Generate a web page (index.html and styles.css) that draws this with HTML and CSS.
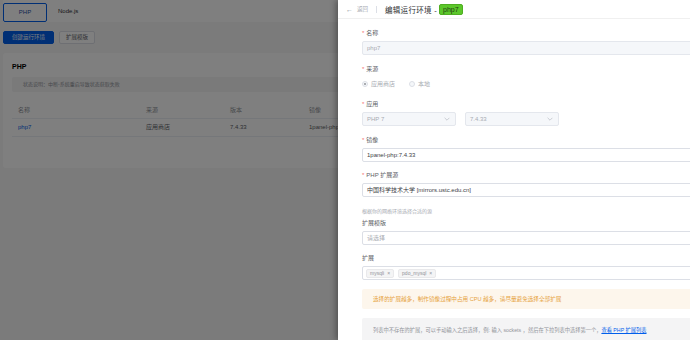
FILE: index.html
```html
<!DOCTYPE html>
<html>
<head>
<meta charset="utf-8">
<link rel="stylesheet" href="styles.css">
</head>
<body>
<div class="page">
  <div class="tabs">
    <div class="tab active">PHP</div>
    <div class="tab">Node.js</div>
  </div>
  <div class="actions">
    <div class="btn primary">创建运行环境</div>
    <div class="btn">扩展模版</div>
  </div>
  <div class="card">
    <div class="card-title">PHP</div>
    <div class="notice">状态说明：中断-系统重启导致状态获取失败</div>
    <div class="table">
      <div class="tr th">
        <div class="td">名称</div><div class="td">来源</div><div class="td">版本</div><div class="td">镜像</div>
      </div>
      <div class="tr">
        <div class="td link">php7</div><div class="td">应用商店</div><div class="td">7.4.33</div><div class="td">1panel-php:7.4.33</div>
      </div>
    </div>
  </div>
</div>
<div class="overlay"></div>
<div class="drawer">
  <div class="drawer-head">
    <span class="back-arrow">←</span>
    <span class="back">返回</span>
    <span class="divider"></span>
    <span class="title">编辑运行环境 -</span>
    <span class="tag-green">php7</span>
  </div>
  <div class="form">
    <div class="field">
      <div class="label"><span class="req">*</span>名称</div>
      <div class="input disabled">php7</div>
    </div>
    <div class="field">
      <div class="label"><span class="req">*</span>来源</div>
      <div class="radios">
        <span class="radio"><span class="dot checked"></span>应用商店</span>
        <span class="radio"><span class="dot"></span>本地</span>
      </div>
    </div>
    <div class="field">
      <div class="label"><span class="req">*</span>应用</div>
      <div class="selects">
        <div class="input disabled select">PHP 7<svg class="chev" viewBox="0 0 10 6" width="6" height="4"><path d="M1 1l4 4 4-4" fill="none" stroke="#b8bcc4" stroke-width="1.2"/></svg></div>
        <div class="input disabled select">7.4.33<svg class="chev" viewBox="0 0 10 6" width="6" height="4"><path d="M1 1l4 4 4-4" fill="none" stroke="#b8bcc4" stroke-width="1.2"/></svg></div>
      </div>
    </div>
    <div class="field">
      <div class="label"><span class="req">*</span>镜像</div>
      <div class="input">1panel-php:7.4.33</div>
    </div>
    <div class="field">
      <div class="label"><span class="req">*</span>PHP 扩展源</div>
      <div class="input">中国科学技术大学 [mirrors.ustc.edu.cn]</div>
      <div class="help">根据你的网络环境选择合适的源</div>
    </div>
    <div class="field">
      <div class="label">扩展模版</div>
      <div class="input placeholder">请选择</div>
    </div>
    <div class="field">
      <div class="label">扩展</div>
      <div class="input multi">
        <span class="tag">mysqli<span class="x">×</span></span>
        <span class="tag">pdo_mysql<span class="x">×</span></span>
      </div>
    </div>
    <div class="warn">选择的扩展越多，制作镜像过程中占用 CPU 越多，请尽量避免选择全部扩展</div>
    <div class="info">列表中不存在的扩展，可以手动输入之后选择，例: 输入 sockets ，然后在下拉列表中选择第一个，<span class="a">查看 PHP 扩展列表</span></div>
  </div>
</div>
</body>
</html>
```

FILE: styles.css
```css
* { box-sizing: border-box; }
html, body { margin: 0; padding: 0; }
body {
  width: 690px;
  height: 340px;
  overflow: hidden;
  background: #f6f6f6;
  font-family: "Liberation Sans", "Noto Sans CJK SC", sans-serif;
  color: #303133;
  position: relative;
}
.page { padding-left: 3px; }
.tabs {
  height: 22px;
  background: #fff;
  display: flex;
  align-items: flex-end;
  font-size: 6px;
}
.tab {
  height: 19px;
  line-height: 17px;
  color: #303133;
  margin-left: 11px;
}
.tab.active {
  width: 44px;
  margin-left: 0;
  border: 1px solid #005eeb;
  border-radius: 2px;
  text-align: center;
  color: #1f4f9f;
}
.actions { display: flex; gap: 5px; margin-top: 9px; }
.btn {
  height: 13px;
  line-height: 11px;
  padding: 0 6px;
  font-size: 5.5px;
  border: 1px solid #dcdfe6;
  background: #fff;
  color: #606266;
  border-radius: 2px;
}
.btn.primary { background: #005eeb; border-color: #005eeb; color: #fff; width: 51px; text-align: center; padding: 0; }
.card {
  margin-top: 9px;
  height: 115px;
  background: #fff;
  border-radius: 3px;
  padding: 10px 0 0 9px;
}
.card-title { font-size: 7px; font-weight: bold; line-height: 8px; color: #000; }
.notice {
  margin-top: 6px;
  height: 15px;
  line-height: 15px;
  background: #f4f4f5;
  color: #909399;
  font-size: 5px;
  padding-left: 11px;
  border-radius: 2px;
}
.table { margin-top: 10px; font-size: 6px; }
.tr {
  display: grid;
  grid-template-columns: 128px 84px 79px 1fr;
  height: 18px;
  line-height: 17px;
  border-bottom: 1px solid #ebeef5;
  color: #606266;
}
.tr.th { height: 17px; line-height: 16px; color: #909399; }
.td { padding-left: 6px; white-space: nowrap; }
.td.link { color: #005eeb; }
.overlay {
  position: absolute;
  inset: 0;
  background: rgba(0, 0, 0, 0.5);
}
.drawer {
  position: absolute;
  top: 0;
  left: 338px;
  width: 440px;
  height: 340px;
  background: #fff;
  box-shadow: -2px 0 6px rgba(0, 0, 0, 0.35);
}
.drawer-head {
  height: 19px;
  border-bottom: 1px solid #f0f0f0;
  display: flex;
  align-items: center;
  padding-left: 8px;
}
.back-arrow { font-size: 7px; color: #909399; }
.back { font-size: 5.5px; color: #a8abb2; margin-left: 4px; }
.divider { width: 1px; height: 7px; background: #dcdfe6; margin: 0 8px 0 8px; }
.title { font-size: 7.5px; color: #303133; letter-spacing: 0.3px; }
.tag-green {
  margin-left: 2px;
  height: 11px;
  line-height: 10px;
  padding: 0 3px;
  font-size: 7px;
  background: #5cc72b;
  border: 1px solid #4fae22;
  border-radius: 2px;
  color: #1f3a12;
}
.form { padding: 9px 0 0 24px; }
.field { margin-bottom: 8.5px; }
.label { font-size: 6px; line-height: 10px; color: #606266; margin-bottom: 3px; }
.req { color: #f56c6c; margin-right: 2px; }
.input {
  height: 14px;
  border: 1px solid #dcdfe6;
  border-radius: 2px;
  font-size: 6px;
  line-height: 12px;
  padding: 0 4px;
  color: #404246;
  white-space: nowrap;
}
.input.disabled { background: #f5f7fa; border-color: #e4e7ed; color: #a8abb2; }
.input.placeholder { color: #a8abb2; }
.radios { height: 14px; display: flex; align-items: center; font-size: 6px; color: #a8abb2; gap: 14px; }
.radio { display: flex; align-items: center; gap: 3px; }
.dot {
  width: 6px; height: 6px; border-radius: 50%;
  border: 1px solid #dcdfe6; background: #f5f7fa;
  display: flex; align-items: center; justify-content: center;
}
.dot.checked::after { content: ""; width: 2px; height: 2px; border-radius: 50%; background: #909399; }
.selects { display: flex; gap: 9px; }
.select { width: 94px; display: flex; align-items: center; justify-content: space-between; padding-right: 5px; }
.multi { display: flex; align-items: center; gap: 4px; padding-left: 3px; }
.tag {
  height: 9px;
  line-height: 7px;
  font-size: 5px;
  padding: 0 3px;
  background: #f4f4f5;
  border: 1px solid #e9e9eb;
  border-radius: 2px;
  color: #909399;
  display: flex;
  gap: 3px;
}
.help { font-size: 5px; line-height: 8px; color: #a8abb2; margin-top: 10px; margin-bottom: -6px; }
.warn {
  height: 20px;
  line-height: 20px;
  background: #fdf6ec;
  color: #e6a23c;
  font-size: 5.6px;
  padding-left: 11px;
  border-radius: 2px;
  margin-bottom: 9px;
  white-space: nowrap;
}
.info {
  height: 28px;
  padding: 8px 0 0 11px;
  background: #f4f4f5;
  color: #909399;
  font-size: 5.25px;
  line-height: 8px;
  border-radius: 2px;
  white-space: nowrap;
}
.a { color: #005eeb; text-decoration: underline; }
```
